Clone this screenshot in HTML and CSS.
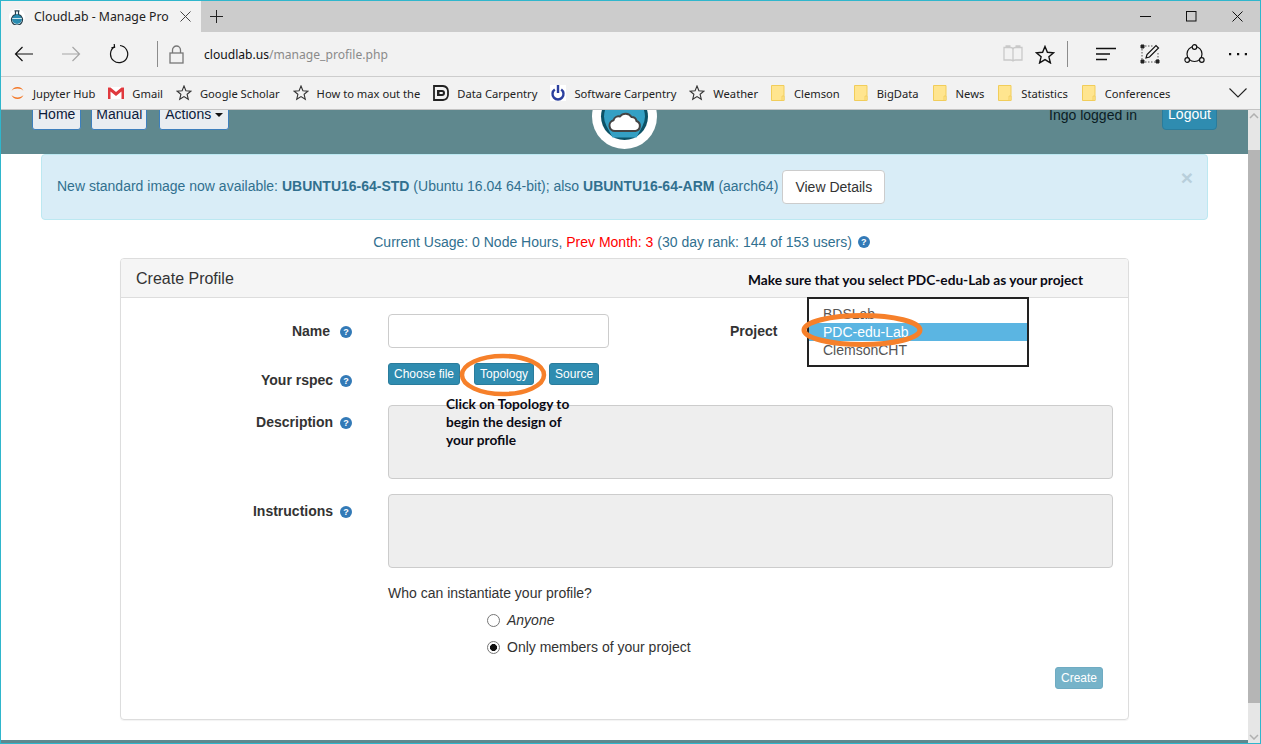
FILE: index.html
```html
<!DOCTYPE html>
<html lang="en">
<head>
<meta charset="utf-8">
<title>CloudLab - Manage Profile</title>
<link rel="stylesheet" href="styles.css">
</head>
<body>
<div class="window">
  <div class="tabstrip">
    <div class="tab">
      <svg class="favicon" width="16" height="16" viewBox="0 0 16 16"><circle cx="8" cy="8" r="8" fill="#fff"/><circle cx="8" cy="10" r="5" fill="#2a8cb0"/><path d="M5.500 1.800h5M6.500 2v3.400a5.500 5.500 0 1 0 3 0V2" fill="none" stroke="#27404c" stroke-width="1.200"/><path d="M3.200 9.500h9.600" stroke="#cfe6ee" stroke-width="1"/></svg>
      <span class="tab-title">CloudLab - Manage Pro</span>
      <svg class="tab-close" width="11" height="11" viewBox="0 0 11 11"><path d="M.5.5l10 10M10.500.5l-10 10" stroke="#444" fill="none"/></svg>
    </div>
    <svg class="newtab" width="13" height="13" viewBox="0 0 13 13"><path d="M6.500 0v13M0 6.500h13" stroke="#222" fill="none"/></svg>
    <div class="winbtns">
      <svg width="11" height="11" viewBox="0 0 11 11"><path d="M0 5.500h11" stroke="#111" fill="none"/></svg>
      <svg width="11" height="11" viewBox="0 0 11 11"><rect x=".5" y=".5" width="9.500" height="9.500" stroke="#111" fill="none"/></svg>
      <svg width="11" height="11" viewBox="0 0 11 11"><path d="M.5.5l10 10M10.500.5l-10 10" stroke="#111" fill="none"/></svg>
    </div>
  </div>

  <div class="toolbar">
    <svg class="tb-back" width="20" height="16" viewBox="0 0 20 16"><path d="M19 8H1.500M8.500 1L1.500 8l7 7" fill="none" stroke="#111" stroke-width="1.200"/></svg>
    <svg class="tb-fwd" width="20" height="16" viewBox="0 0 20 16"><path d="M1 8h17.500M11.500 1l7 7-7 7" fill="none" stroke="#a6a6a6" stroke-width="1.200"/></svg>
    <svg class="tb-reload" width="20" height="20" viewBox="0 0 20 20"><path d="M5.500 2.800A8.600 8.600 0 1 0 11 1.500" fill="none" stroke="#111" stroke-width="1.200"/><path d="M5.200 0l.4 3.200-3.200.6" fill="none" stroke="#111" stroke-width="1.200"/></svg>
    <span class="tb-sep"></span>
    <svg class="tb-lock" width="15" height="19" viewBox="0 0 15 19"><rect x="1" y="8" width="13" height="10" fill="none" stroke="#777" stroke-width="1.300"/><path d="M3.500 8V5a4 4 0 0 1 8 0v3" fill="none" stroke="#777" stroke-width="1.300"/></svg>
    <div class="url"><span class="url-host">cloudlab.us</span><span class="url-path">/manage_profile.php</span></div>
    <svg class="tb-book" width="20" height="18" viewBox="0 0 20 18"><path d="M1 2.500h6.500c1.300 0 2.500.5 2.500 2v12c0-1-1-1.500-2.500-1.500H1zM19 2.500h-6.500c-1.300 0-2.500.5-2.500 2v12c0-1 1-1.500 2.500-1.500H19zM2.500 1h5M12.500 1h5" fill="none" stroke="#c9c9c9" stroke-width="1.300"/></svg>
    <svg class="tb-star" width="20" height="19" viewBox="0 0 20 19"><path d="M10 1.500l2.400 5.800 6.200.5-4.700 4 1.500 6.100L10 14.600l-5.400 3.300 1.500-6.100-4.700-4 6.200-.5z" fill="none" stroke="#111" stroke-width="1.400"/></svg>
    <span class="tb-sep tb-sep-right"></span>
    <svg class="tb-hub" width="20" height="14" viewBox="0 0 20 14"><path d="M0 1.500h20M0 7h14M0 12.500h11" stroke="#111" stroke-width="1.300" fill="none"/></svg>
    <svg class="tb-note" width="20" height="20" viewBox="0 0 20 20"><path d="M2 2h12M2 18h16M2 2v16M18 9v9" stroke="#555" stroke-dasharray="1.500 1.500" fill="none"/><path d="M1 1h3v3H1zM1 16h3v3H1zM16 16h3v3h-3z" fill="#222" stroke="#222"/><path d="M6 14l1-3.500L16 1.500l2.500 2.500-9 9z" fill="#f2f2f2" stroke="#111" stroke-width="1.200"/></svg>
    <svg class="tb-share" width="21" height="20" viewBox="0 0 21 20"><circle cx="10.500" cy="10" r="7.500" fill="none" stroke="#111" stroke-width="1.200"/><circle cx="10.500" cy="3" r="2.300" fill="#f2f2f2" stroke="#111" stroke-width="1.200"/><circle cx="3.200" cy="16" r="2.300" fill="#f2f2f2" stroke="#111" stroke-width="1.200"/><circle cx="17.800" cy="16" r="2.300" fill="#f2f2f2" stroke="#111" stroke-width="1.200"/></svg>
    <svg class="tb-more" width="18" height="3" viewBox="0 0 18 3"><path d="M0 0h2.200v2.200H0zM8 0h2.200v2.200H8zM15.800 0H18v2.200h-2.200z" fill="#111"/></svg>
  </div>

  <div class="bookmarks">
    <div class="bm"><svg width="15" height="16" viewBox="0 0 15 16"><path d="M1.500 6A6.500 6.500 0 0 1 13.500 6C11 2.800 4 2.800 1.500 6zM1.500 10A6.500 6.500 0 0 0 13.500 10C11 13.200 4 13.200 1.500 10z" fill="#f37726"/></svg><span>Jupyter Hub</span></div>
    <div class="bm"><svg width="16" height="16" viewBox="0 0 16 16"><rect y="2" width="16" height="12" fill="#fff"/><path d="M0 2.500h2.500L8 7l5.500-4.500H16V14h-2.500V6.500L8 11 2.500 6.500V14H0z" fill="#e0393e"/></svg><span>Gmail</span></div>
    <div class="bm"><svg width="16" height="16" viewBox="0 0 16 16"><use href="#bmstar"/></svg><span>Google Scholar</span></div>
    <div class="bm"><svg width="16" height="16" viewBox="0 0 16 16"><use href="#bmstar"/></svg><span>How to max out the</span></div>
    <div class="bm"><svg width="16" height="16" viewBox="0 0 16 16"><path d="M1 1h9a5.500 5.500 0 0 1 5 5v4a5.500 5.500 0 0 1-5 5H1z" fill="none" stroke="#222" stroke-width="1.800"/><path d="M4 5h5a3 3 0 0 1 0 6H4zM6.500 7v2H9a1 1 0 0 0 0-2z" fill="#222" fill-rule="evenodd"/></svg><span>Data Carpentry</span></div>
    <div class="bm"><svg width="16" height="16" viewBox="0 0 16 16"><rect width="16" height="16" fill="#fff"/><path d="M4.800 4.500a5.500 5.500 0 1 0 6.400 0" fill="none" stroke="#2b3f9e" stroke-width="2.400"/><path d="M8 0v8" stroke="#2b3f9e" stroke-width="2.400"/></svg><span>Software Carpentry</span></div>
    <div class="bm"><svg width="16" height="16" viewBox="0 0 16 16"><use href="#bmstar"/></svg><span>Weather</span></div>
    <div class="bm bm-folder"><svg width="14" height="16" viewBox="0 0 14 16"><use href="#bmfolder"/></svg><span>Clemson</span></div>
    <div class="bm bm-folder"><svg width="14" height="16" viewBox="0 0 14 16"><use href="#bmfolder"/></svg><span>BigData</span></div>
    <div class="bm bm-folder"><svg width="14" height="16" viewBox="0 0 14 16"><use href="#bmfolder"/></svg><span>News</span></div>
    <div class="bm bm-folder"><svg width="14" height="16" viewBox="0 0 14 16"><use href="#bmfolder"/></svg><span>Statistics</span></div>
    <div class="bm bm-folder"><svg width="14" height="16" viewBox="0 0 14 16"><use href="#bmfolder"/></svg><span>Conferences</span></div>
    <svg class="bm-more" width="18" height="10" viewBox="0 0 18 10"><path d="M.5.500L9 9l8.500-8.500" fill="none" stroke="#222" stroke-width="1.100"/></svg>
  </div>

  <div class="viewport">
    <div class="page">
      <header class="site-header">
        <div class="site-nav">
          <button class="nav-btn">Home</button>
          <button class="nav-btn nav-manual">Manual</button>
          <button class="nav-btn">Actions <span class="caret"></span></button>
        </div>
        <div class="site-user">
          <span class="user-text">Ingo logged in</span>
          <button class="logout">Logout</button>
        </div>
        <svg class="logo" width="65" height="65" viewBox="0 0 65 65">
          <circle cx="32.500" cy="32.500" r="32.500" fill="#fff"/>
          <circle cx="32.500" cy="32.500" r="23.500" fill="#0c5266"/>
          <path d="M12 32.500A20.500 20.500 0 0 1 53 32.500 20.500 20.500 0 0 1 50.500 42L44.500 53.500H20.500L14.500 42A20.500 20.500 0 0 1 12 32.500z" fill="#34a0c4"/>
          <path d="M23 47a5.500 5.500 0 0 1-1.500-10.800 5.500 5.500 0 0 1 6.500-3.700 7 7 0 0 1 11.500.5 5 5 0 0 1 5 4 5.200 5.200 0 0 1-1 10z" fill="#fff" stroke="#444" stroke-width="2"/>
        </svg>
      </header>

      <div class="alert">
        <span class="alert-text">New standard image now available: <b>UBUNTU16-64-STD</b> (Ubuntu 16.04 64-bit); also <b>UBUNTU16-64-ARM</b> (aarch64)</span>
        <button class="details">View Details</button>
        <span class="alert-close">×</span>
      </div>

      <p class="usage">Current Usage: 0 Node Hours, <span class="usage-red">Prev Month: 3</span> (30 day rank: 144 of 153 users) <span class="help help-usage">?</span></p>

      <section class="panel">
        <h3 class="panel-heading">Create Profile</h3>
        <div class="panel-body">
          <div class="row row-name">
            <label class="label label-name">Name <span class="help">?</span></label>
            <input class="text-input" type="text">
            <label class="label-project">Project</label>
          </div>
          <div class="row row-rspec">
            <label class="label">Your rspec <span class="help">?</span></label>
            <div class="file-btns">
              <button class="mini">Choose file</button>
              <button class="mini">Topology</button>
              <button class="mini mini-source">Source</button>
            </div>
          </div>
          <div class="row row-area">
            <label class="label">Description <span class="help">?</span></label>
            <textarea class="area" disabled></textarea>
          </div>
          <div class="row row-area">
            <label class="label">Instructions <span class="help">?</span></label>
            <textarea class="area" disabled></textarea>
          </div>
          <p class="who">Who can instantiate your profile?</p>
          <label class="radio"><input type="radio" name="who"><em>Anyone</em></label>
          <label class="radio"><input type="radio" name="who" checked><span>Only members of your project</span></label>
          <div class="actions"><button class="create">Create</button></div>
        </div>

        <p class="note note-project">Make sure that you select PDC-edu-Lab as your project</p>
        <ul class="listbox">
          <li>BDSLab</li>
          <li class="selected">PDC-edu-Lab</li>
          <li>ClemsonCHT</li>
        </ul>
        <p class="note note-topology">Click on Topology to begin the design of your profile</p>
        <svg class="ring ring-project" width="125" height="38" viewBox="0 0 125 38"><ellipse cx="62" cy="19" rx="58" ry="14.500" fill="none" stroke="#f6802a" stroke-width="5"/></svg>
        <svg class="ring ring-topology" width="90" height="46" viewBox="0 0 90 46"><ellipse cx="45" cy="23" rx="41" ry="19" fill="none" stroke="#f6802a" stroke-width="4.500"/></svg>
      </section>
      <div class="site-footer"></div>
    </div>

    <div class="scrollbar">
      <svg class="sb-arrow" width="10" height="6" viewBox="0 0 10 6"><path d="M1 5l4-4 4 4" fill="none" stroke="#b0b0b0" stroke-width="1.500"/></svg>
      <div class="sb-thumb"></div>
      <svg class="sb-arrow sb-arrow-down" width="10" height="6" viewBox="0 0 10 6"><path d="M1 1l4 4 4-4" fill="none" stroke="#b0b0b0" stroke-width="1.500"/></svg>
    </div>
  </div>
</div>

<svg class="defs" width="0" height="0">
  <defs>
    <path id="bmstar" d="M8 1l1.900 4.700 5 .4-3.800 3.200 1.200 5L8 11.600l-4.300 2.700 1.200-5L1.100 6.100l5-.4z" fill="none" stroke="#333" stroke-width="1.100"/>
    <g id="bmfolder"><path d="M.5.500h12.500v15H.5z" fill="#ffe58f" stroke="#f1cd5a"/><path d="M11 11h2v4.500h-2z" fill="#ffe58f" stroke="#f1cd5a" stroke-width=".8"/></g>
  </defs>
</svg>
</body>
</html>
```

FILE: styles.css
```css
* { box-sizing: border-box; }
html, body { margin: 0; padding: 0; height: 100%; overflow: hidden; background: #fff; }
body { font-family: "Liberation Sans", Arial, sans-serif; font-size: 14px; color: #333; }
button { font-family: inherit; cursor: pointer; }

.defs { position: absolute; }

.window {
  width: 1261px;
  height: 744px;
  border: 1px solid #2fb6cc;
  display: flex;
  flex-direction: column;
  overflow: hidden;
}

/* tab strip */
.tabstrip { height: 31px; flex: none; background: #cccccc; display: flex; align-items: center; }
.tab { width: 200px; height: 31px; background: #f2f2f2; display: flex; align-items: center; padding-left: 8px; }
.favicon { flex: none; }
.tab-title {
  font-family: "Noto Sans", sans-serif;
  font-size: 12.3px;
  color: #222;
  margin-left: 9px;
  width: 135px;
  white-space: nowrap;
  overflow: hidden;
  flex: none;
}
.tab-close { margin-left: 11px; flex: none; }
.newtab { margin-left: 9px; }
.winbtns { margin-left: auto; display: flex; gap: 35px; padding-right: 17px; }

/* toolbar */
.toolbar { height: 45px; flex: none; background: #f2f2f2; border-bottom: 1px solid #cdcdcd; display: flex; align-items: center; }
.tb-back { margin-left: 13px; flex: none; }
.tb-fwd { margin-left: 27px; flex: none; }
.tb-reload { margin-left: 28px; flex: none; }
.tb-sep { width: 1px; height: 26px; background: #8c8c8c; margin-left: 28px; flex: none; }
.tb-lock { margin-left: 11px; flex: none; }
.url { font-family: "Noto Sans", sans-serif; font-size: 12.1px; margin-left: 20px; width: 799px; flex: none; white-space: nowrap; }
.url-host { color: #111; }
.url-path { color: #8a8a8a; }
.tb-book { flex: none; }
.tb-star { margin-left: 12px; flex: none; }
.tb-sep-right { margin-left: 12px; }
.tb-hub { margin-left: 28px; flex: none; }
.tb-note { margin-left: 24px; flex: none; }
.tb-share { margin-left: 24px; flex: none; }
.tb-more { margin-left: 24px; flex: none; }

/* favourites */
.bookmarks { height: 33px; flex: none; background: #f2f2f2; border-bottom: 1px solid #c4c4c4; display: flex; align-items: center; padding-left: 9px; gap: 13px; }
.bm { display: flex; align-items: center; gap: 8px; font-family: "Noto Sans", sans-serif; font-size: 11.2px; color: #222; white-space: nowrap; }
.bm svg { flex: none; }
.bm-folder { gap: 9px; margin-right: 1px; }
.bm-more { margin-left: auto; margin-right: 13px; flex: none; }

/* viewport */
.viewport { flex: 1; min-height: 0; display: flex; }
.page { flex: 1; min-width: 0; overflow: hidden; }

.site-header {
  height: 44px;
  background: #5f888e;
  overflow: hidden;
  position: relative;
  display: flex;
  justify-content: space-between;
}
.site-nav { display: flex; padding-left: 31px; align-items: flex-end; height: 20px; gap: 10px; }
.nav-btn {
  height: 34px;
  flex: none;
  background: #e9edf1;
  border: 1px solid #3d7fbd;
  border-radius: 3px;
  padding: 2px 5px 0;
  font-size: 14px;
  color: #0c1a3a;
}
.nav-manual { padding: 2px 4px 0; margin-right: 2px; }
.caret { display: inline-block; border-top: 4px solid #111; border-left: 4px solid transparent; border-right: 4px solid transparent; vertical-align: middle; }
.site-user { display: flex; align-items: flex-end; height: 20px; padding-right: 31px; }
.user-text { color: #0b1c24; font-size: 14px; margin-right: 25px; position: relative; top: -7px; }
.logout { height: 34px; width: 55px; flex: none; padding: 2px 0 0; background: #2f8cb0; border: 1px solid #2a7c9c; border-radius: 4px; color: #fff; font-size: 14px; }
.logo { position: absolute; left: 591px; top: -26px; }

.alert {
  margin: 0 40px;
  height: 66px;
  background: #d9edf7;
  border: 1px solid #bce8f1;
  border-radius: 4px;
  color: #31708f;
  display: flex;
  align-items: center;
  padding-left: 15px;
  position: relative;
}
.alert-text { margin-bottom: 2px; }
.details { margin-left: 4px; height: 34px; width: 103px; flex: none; background: #fff; border: 1px solid #ccc; border-radius: 4px; font-size: 14px; color: #333; padding: 0; }
.alert-close { position: absolute; right: 14px; top: 11px; font-size: 21px; line-height: 24px; font-weight: bold; color: #b8cfdb; }

.usage { margin: 12px 0 6px; height: 20px; line-height: 20px; text-align: center; color: #31708f; padding-right: 6px; }
.usage-red { color: #f00; }
.help {
  display: inline-block;
  width: 12px;
  height: 12px;
  border-radius: 50%;
  background: #337ab7;
  color: #fff;
  font-size: 9px;
  font-weight: bold;
  line-height: 12px;
  text-align: center;
  vertical-align: 1px;
}
.help-usage { margin-left: 2px; vertical-align: 2px; }

.panel {
  margin: 0 119px;
  border: 1px solid #ddd;
  border-radius: 4px;
  position: relative;
  height: 462px;
  box-shadow: 0 1px 1px rgba(0, 0, 0, .05);
}
.panel-heading {
  margin: 0;
  height: 39px;
  background: #f5f5f5;
  border-bottom: 1px solid #ddd;
  border-radius: 3px 3px 0 0;
  padding-left: 15px;
  font-size: 16px;
  font-weight: normal;
  line-height: 39px;
  color: #333;
}
.panel-body { padding: 16px 15px 0 0; }

.row { display: flex; align-items: flex-start; }
.row-rspec { margin-top: 15px; margin-bottom: 15px; }
.row-area { margin-bottom: 15px; }

.label {
  width: 231px;
  margin-right: 36px;
  flex: none;
  padding: 7px 0 0;
  text-align: right;
  font-weight: bold;
  line-height: 20px;
  color: #333;
}
.label .help { margin-left: 3px; }
.label-name .help { margin-left: 6px; }
.text-input { width: 221px; height: 34px; border: 1px solid #ccc; border-radius: 4px; background: #fff; flex: none; }
.label-project { margin: 7px 0 0 121px; font-weight: bold; line-height: 20px; }
.file-btns { display: flex; gap: 14px; height: 22px; }
.mini { height: 22px; padding: 0 5px; border: 1px solid #2a7c9c; border-radius: 3px; background: #2f8cb0; color: #fff; font-size: 12px; flex: none; }
.mini-source { margin-left: 1px; }
.area { display: block; width: 725px; height: 74px; background: #eee; border: 1px solid #ccc; border-radius: 4px; resize: none; flex: none; }

.who { margin: 15px 0 7px 267px; line-height: 20px; color: #333; }
.radio { display: flex; align-items: center; height: 20px; margin: 0 0 7px 366px; gap: 7px; color: #333; }
.radio input {
  appearance: none;
  -webkit-appearance: none;
  margin: 0;
  width: 13px;
  height: 13px;
  border: 1px solid #767676;
  border-radius: 50%;
  background: #fff;
  flex: none;
}
.radio input:checked { background: radial-gradient(circle, #111 0 3.2px, #fff 3.8px); }
.actions { display: flex; justify-content: flex-end; padding: 3px 10px 0 0; }
.create { width: 48px; height: 22px; padding: 0; background: #76b3c9; border: 1px solid #6fabc2; border-radius: 3px; color: #fff; font-size: 12px; }

.note { margin: 0; position: absolute; font-family: Lato, "Liberation Sans", sans-serif; font-weight: bold; font-size: 13.7px; color: #0a0a14; }
.note-project { left: 627px; top: 12px; white-space: nowrap; line-height: 18px; }
.note-topology { left: 325px; top: 136px; width: 135px; line-height: 18px; }

.listbox {
  position: absolute;
  left: 686px;
  top: 38px;
  width: 222px;
  height: 70px;
  margin: 0;
  padding: 6px 0 0;
  list-style: none;
  background: #fff;
  border: 2px solid #222;
  color: #555;
}
.listbox li { height: 18px; line-height: 18px; padding-left: 14px; }
.listbox .selected { background: #5bb5e2; color: #fff; }

.ring { position: absolute; }
.ring-project { left: 679px; top: 52px; }
.ring-topology { left: 337px; top: 93px; }

.site-footer { height: 3px; margin-top: 20px; background: #5f888e; }

/* scrollbar */
.scrollbar { width: 12px; flex: none; background: #e6e6e6; display: flex; flex-direction: column; align-items: center; }
.sb-arrow { margin-top: 3px; flex: none; height: 6px; }
.sb-arrow-down { margin: 31px 0 3px; }
.sb-thumb { width: 12px; margin-top: 31px; flex: 1; background: #b5b5b5; }
```
